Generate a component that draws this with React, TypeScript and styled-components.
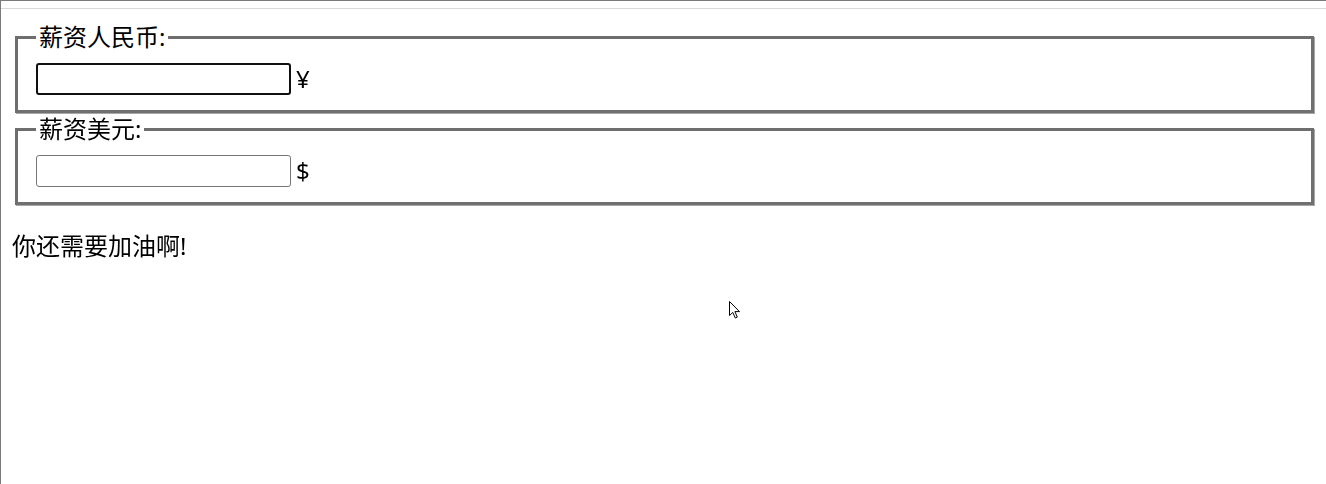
import React from 'react';
import styled, { createGlobalStyle } from 'styled-components';

const GlobalStyle = createGlobalStyle`
  html, body {
    margin: 0;
    padding: 0;
    background: #ffffff;
  }

  body {
    font-family: "Noto Sans", "Noto Sans CJK SC", sans-serif;
    color: #000000;
  }
`;

const Window = styled.div`
  position: relative;
  min-height: 484px;
  box-sizing: border-box;
  border-left: 1px solid #7a7a7a;
  overflow: hidden;
`;

const TopStrip = styled.div`
  height: 9px;
  box-sizing: border-box;
  border-top: 1px solid #7a7a7a;
  border-bottom: 1px solid #d9d9dc;
  margin-left: -1px;
`;

const Page = styled.div`
  padding: 12px 9px 12px 11px;
  font-size: 24px;
  line-height: 32px;
`;

const FieldBox = styled.fieldset`
  margin: 0 3px;
  padding: 10px 18px 15px;
  border: 3px solid #6e6e6e;
  border-right-color: #707070;
  border-bottom-color: #707070;
  box-shadow: 1px 1px 0 #a8a8a8;
  min-width: 0;
`;

const Legend = styled.legend`
  padding: 0 3px;
  font-size: 24px;
  line-height: 32px;
`;

const Row = styled.div`
  display: flex;
  align-items: center;
  gap: 5px;
  height: 32px;
`;

const MoneyInput = styled.input<{ $focused?: boolean }>`
  box-sizing: border-box;
  width: 255px;
  height: 32px;
  margin: 0;
  padding: 1px 4px;
  font-family: inherit;
  font-size: 20px;
  border: ${(p) => (p.$focused ? '2px solid #101010' : '1px solid #767676')};
  border-radius: 3px;
  outline: none;
  background: #ffffff;
  caret-color: #000000;
`;

const Unit = styled.span`
  font-size: 24px;
`;

const Verdict = styled.p`
  margin: 25px 0;
  font-size: 24px;
  line-height: 32px;
`;

const Pointer = styled.svg`
  position: absolute;
  left: 727px;
  top: 300px;
`;

const App: React.FC = () => {
  return (
    <>
      <GlobalStyle />
      <Window>
        <TopStrip />
        <Page>
          <FieldBox>
            <Legend>薪资人民币:</Legend>
            <Row>
              <MoneyInput type='text' $focused autoFocus />
              <Unit>¥</Unit>
            </Row>
          </FieldBox>
          <FieldBox>
            <Legend>薪资美元:</Legend>
            <Row>
              <MoneyInput type='text' />
              <Unit>$</Unit>
            </Row>
          </FieldBox>
          <Verdict>你还需要加油啊!</Verdict>
        </Page>
        <Pointer width='14' height='20' viewBox='0 0 14 20'>
          <path
            d='M1.5 1.5 L1.5 15.5 L4.8 12.4 L7.3 18 L9.3 17.1 L6.9 11.6 L11.5 11.6 Z'
            fill='#ffffff'
            stroke='#000000'
            strokeWidth='1'
            strokeLinejoin='miter'
          />
        </Pointer>
      </Window>
    </>
  );
};

export default App;
